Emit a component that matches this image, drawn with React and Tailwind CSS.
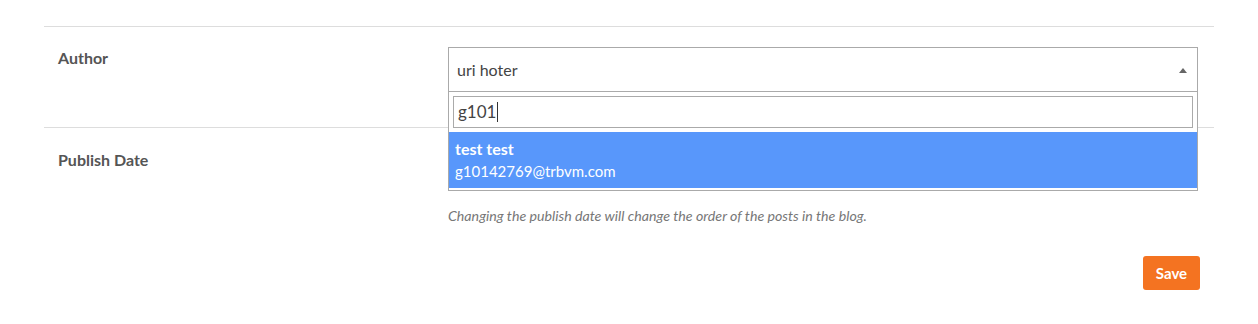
import React from "react";

export default function App() {
  return (
    <div className="w-[1258px] h-[324px] bg-white relative" style={{ fontFamily: "Lato, 'Noto Sans', sans-serif" }}>
      <div className="pt-[26px] pl-[44px] pr-[44px]">
        {/* Author row */}
        <div className="border-t border-[#dddddd] flex h-[101px]">
          <div className="w-[404px] pl-[14px] pt-[21px] text-[16px] font-bold text-[#555555] leading-[20px]">Author</div>
          <div className="w-[750px] pt-[20px] relative">
            <div className="h-[45px] border border-[#aaaaaa] flex items-center justify-between pl-[8px] pr-[10px] text-[16px] text-[#444444]">
              <span>uri hoter</span>
              <svg width="8" height="5" viewBox="0 0 8 5" className="mt-[1px]">
                <path d="M0 5 L4 0 L8 5 Z" fill="#666666" />
              </svg>
            </div>
            {/* Dropdown */}
            <div className="absolute left-0 top-[65px] w-[750px] bg-white border border-t-0 border-[#aaaaaa] z-10">
              <div className="p-[4px]">
                <div className="w-full h-[32px] border border-[#aaaaaa] px-[4px] text-[17px] text-[#444444] flex items-center">
                  <span>g101</span>
                  <span className="w-[1px] h-[20px] bg-[#333333] ml-[1px]" />
                </div>
              </div>
              <div className="bg-[#5897fb] text-white px-[6px] py-[6px] text-[15px] leading-[22px]">
                <div className="font-bold text-[16px]">test test</div>
                <div>g10142769@trbvm.com</div>
              </div>
              <div className="h-[2px]" />
            </div>
          </div>
        </div>
        {/* Publish Date row */}
        <div className="border-t border-[#dddddd] flex">
          <div className="w-[404px] pl-[14px] pt-[22px] text-[16px] font-bold text-[#555555] leading-[20px]">Publish Date</div>
          <div className="w-[750px] pt-[20px]">
            <div className="h-[43px] border border-[#aaaaaa]" />
            <div className="mt-[16px] text-[14.2px] italic text-[#777777] leading-[18px]">
              Changing the publish date will change the order of the posts in the blog.
            </div>
            <div className="flex justify-end mt-[31px] mr-[-2px]">
              <button className="w-[57px] h-[34px] bg-[#f47321] text-white text-[15px] font-bold rounded-[3px]">Save</button>
            </div>
          </div>
        </div>
      </div>
    </div>
  );
}
